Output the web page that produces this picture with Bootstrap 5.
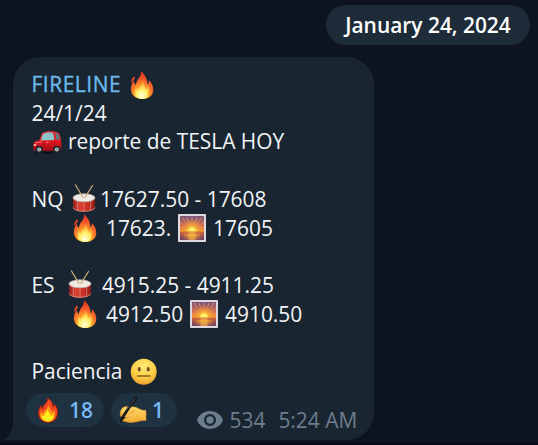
<!DOCTYPE html>
<html lang="es" data-bs-theme="dark">
<head>
<meta charset="utf-8">
<meta name="viewport" content="width=device-width, initial-scale=1">
<title>FIRELINE</title>
<link href="https://cdn.jsdelivr.net/npm/bootstrap@5.3.0/dist/css/bootstrap.min.css" rel="stylesheet">
<style>
body{background:#0d131f;font-family:"Open Sans",sans-serif;font-size:20.92px;line-height:28.7px;color:#f1f4f6;height:445px}
.chat{height:445px;padding:5px 8px 0 13px;border-bottom:2px solid #080916}
.date-pill{width:204px;height:40px;background:#1e2b38;color:#fff;font-weight:600}
.bubble{width:361px;height:383px;margin-top:12px;background:#192530;border-radius:27px 27px 27px 0;padding:13px 17px 0 18.5px}
.tail{left:-9px;bottom:0;width:10px;height:22px}
.message{white-space:pre}
.sender{color:#6cb9ec;letter-spacing:.55px;-webkit-text-stroke:.35px #6cb9ec}
.emo{width:30px;height:30px;vertical-align:.5px;margin:-8px 1px -8px 0;overflow:visible}
.reactions{margin:7.3px 0 0 -5.5px;gap:7px}
.react{height:34px;background:#1e3241;color:#75b8f3;font-weight:600}
.react-fire{width:78px;padding-left:7px}
.react-write{width:66px;padding-left:7px}
.react .emo{margin:0}
.meta{color:#6c7d8e;margin:20.5px 0 0 20px}
.eye{width:26px;height:18px;margin:-2px 6.5px 0 0}
.views{margin-right:13px}
</style>
<script src="https://cdn.jsdelivr.net/npm/bootstrap@5.3.0/dist/js/bootstrap.bundle.min.js"></script>
</head>
<body>
<svg width="0" height="0" class="position-absolute" aria-hidden="true">
<defs>
<radialGradient id="gFire" cx=".48" cy=".88" r=".85"><stop offset="0" stop-color="#fff9a8"/><stop offset=".2" stop-color="#ffe052"/><stop offset=".42" stop-color="#fd9a2b"/><stop offset=".7" stop-color="#f2552a"/><stop offset="1" stop-color="#dc3020"/></radialGradient>
<radialGradient id="gCore" cx=".5" cy=".85" r=".8"><stop offset="0" stop-color="#fffde0"/><stop offset=".45" stop-color="#fff06a"/><stop offset="1" stop-color="#ff9a30" stop-opacity=".75"/></radialGradient>
<linearGradient id="gCar" x2="0" y2="1"><stop offset="0" stop-color="#e8343a"/><stop offset=".55" stop-color="#e01422"/><stop offset="1" stop-color="#9e0c17"/></linearGradient>
<linearGradient id="gDrum"><stop offset="0" stop-color="#8f1f18"/><stop offset=".3" stop-color="#dc4234"/><stop offset=".7" stop-color="#c52e24"/><stop offset="1" stop-color="#84190f"/></linearGradient>
<linearGradient id="gSky" x2="0" y2="1"><stop offset="0" stop-color="#75567e"/><stop offset=".4" stop-color="#d36b55"/><stop offset=".68" stop-color="#ffa62b"/><stop offset=".7" stop-color="#b6583c"/><stop offset="1" stop-color="#714565"/></linearGradient>
<radialGradient id="gSun" cx=".5" cy=".62" r=".5"><stop offset="0" stop-color="#fff36a"/><stop offset=".35" stop-color="#ffbd30" stop-opacity=".9"/><stop offset="1" stop-color="#f0813c" stop-opacity="0"/></radialGradient>
<radialGradient id="gFace" cx=".5" cy=".3" r=".75"><stop offset="0" stop-color="#ffe978"/><stop offset=".55" stop-color="#fdd047"/><stop offset="1" stop-color="#e9992a"/></radialGradient>
<linearGradient id="gHand" x2="0" y2="1"><stop offset="0" stop-color="#ffdb69"/><stop offset="1" stop-color="#f2aa35"/></linearGradient>
</defs>
<symbol id="fire" viewBox="0 0 30 30">
<path fill="url(#gFire)" d="M14.2 1C15.8 3 18.4 5.500 19.600 9C20.300 11 20.300 13 20.700 14.500C22 13.500 22 11.500 21.600 10C24.500 12.500 26.500 16.300 26.300 20.200C26 25.600 21.300 29 15.200 29C8.500 29 4 25 3.900 19.500C3.800 15.500 5.300 12.700 6.900 10.800C7 12.500 7.500 14 8.800 15C9.200 12.300 10 10.300 11.700 8.200C13.500 6 14.500 3.700 14.200 1Z"/>
<path fill="#ee4b2a" d="M7 6.300C8.500 7.600 7.800 9 6.300 10.500C5.500 11.500 4.900 12.500 4.500 13.200C3.800 10.700 5 8.800 7 6.300Z"/>
<path fill="url(#gCore)" d="M15.800 10.500C16.500 14 18.200 16.500 18.700 19C20 18.300 20.600 17 20.500 15.700C22.300 19 22.600 22.400 20.900 25.300C19.300 28 17.300 28.800 14.700 28.800C10.300 28.800 7.400 26.200 7.500 22.800C7.500 20.700 8.300 19 9.300 17.500C9.600 19 10.100 20 11.200 20.500C12 17 15.500 15 15.800 10.500Z"/>
</symbol>
<symbol id="firebold" viewBox="0 0 30 30">
<path fill="#f34922" stroke="#a91b0e" stroke-width="1" d="M14.300 3.300C17.500 4.500 20 7.500 19.800 12C21 11.500 21.500 10 21.300 9C23.800 12 25 15 24.400 19C23.700 24.500 20 27.300 15 27.300C9.200 27.300 5.700 23.700 5.600 18.800C5.500 15.300 6.300 12.300 8.300 10.500C8.200 12 8.700 13.300 9.500 14C9.600 11 11.500 10 13 8C14.300 6.300 14.800 5 14.300 3.300Z"/>
<path fill="#ff9b13" d="M15.300 9.500C16.200 13 18.500 15 19.300 17.500Q20.700 16.500 21 15C24 21 21 26.700 15 26.700C10 26.700 6.900 23.500 7.200 19.500Q7.500 17.500 8.300 16Q9 18 10.500 18.500C11 15.500 15 14 15.300 9.500Z"/>
<path fill="#ffed1e" d="M14.300 14.300C14.800 17.500 17 18.500 18 21Q19.500 20.600 20 19C21.500 23.500 19 26.500 15 26.500C10.500 26.500 8 23.500 8.800 20Q9.600 21.300 11 21.200C11.300 18.500 14 17.500 14.300 14.300Z"/>
</symbol>
<symbol id="car" viewBox="0 0 30 30">
<ellipse cx="15" cy="25.500" rx="13" ry="1.200" fill="#0c1218"/>
<path fill="url(#gCar)" d="M10.200 6C14 3.900 22.500 3.700 26.500 6C28.500 7.500 29 12.500 29.300 16.500V21Q29 23.500 27 24H5C2.500 23.800 1.300 23 1.300 21V18C1.700 14.500 4 13.500 7.200 13.200Z"/>
<path fill="#8dc6c9" d="M11.500 6.800C13.500 5.500 18 5 20.500 5.700C21.700 8 22.200 10.500 22.200 13L9 13.400Q9.500 9.500 11.500 6.800Z"/>
<path fill="#537d88" d="M23.200 6.200Q25.800 6.200 26.600 7.500Q27.500 10 27.500 12.600H24.300Q24.300 9 23.200 6.200Z"/>
<path fill="none" stroke="#a8101b" stroke-width=".8" d="M12 14V22M22.500 14V19"/>
<path stroke="#f5747a" stroke-width=".9" d="M3 15.800L10 15M14 15.500H16.500"/>
<ellipse cx="3" cy="18" rx="1.300" ry="1" fill="#ffc6a0"/>
<g fill="#25282c"><circle cx="7.200" cy="22.500" r="3.700"/><circle cx="24.800" cy="22.500" r="3.700"/></g>
<g fill="#b8bec2"><circle cx="7.200" cy="22.500" r="2"/><circle cx="24.800" cy="22.500" r="2"/></g>
<g fill="#70777c"><circle cx="7.200" cy="22.500" r=".8"/><circle cx="24.800" cy="22.500" r=".8"/></g>
</symbol>
<symbol id="drum" viewBox="0 0 30 30">
<path fill="url(#gDrum)" d="M4 14V24C5.500 29 24.500 29 26 24V14Z"/>
<path fill="none" stroke="#d5a39a" stroke-width=".7" d="M4 23.500C5.500 28.500 24.500 28.500 26 23.500"/>
<path stroke="#e9b7a8" stroke-width=".5" d="M8.300 16V26.500M15 17V27.500M21.700 16V26.500"/>
<ellipse cx="15" cy="13.800" rx="11" ry="4" fill="#f0ebe6" stroke="#b8aaa5" stroke-width=".8"/>
<g stroke="#c8ad78" stroke-width="1.300" stroke-linecap="round"><path d="M6.500 1L14 13.500M23.500 1.500L16 13.500"/></g>
</symbol>
<symbol id="sunrise" viewBox="0 0 30 30">
<rect x="1" y="1" width="28" height="28" rx="1" fill="#ddd9df"/>
<rect x="3" y="3" width="24" height="24" fill="url(#gSky)"/>
<g stroke="#f2a34c" stroke-width=".8" opacity=".8"><path d="M15 18V4M15 18L10 4M15 18L5 4M15 18L3 9M15 18L3 14M15 18L20 4M15 18L25 4M15 18L27 9M15 18L27 14"/></g>
<rect x="3" y="3" width="24" height="24" fill="url(#gSun)"/>
<path fill="#fff16b" d="M11.300 18.300A3.700 3.700 0 0 1 18.700 18.300Z"/>
<path fill="#b9573f" d="M3 18.500H27V21H3Z" opacity=".65"/>
<path fill="#efaa48" d="M11.500 18.500H18.500V27H11.500Z" opacity=".65"/>
</symbol>
<symbol id="neutral" viewBox="0 0 30 30">
<circle cx="15.700" cy="14.800" r="13" fill="url(#gFace)"/>
<g fill="#73501b"><ellipse cx="11.200" cy="12.200" rx="1.500" ry="2.200"/><ellipse cx="20.200" cy="12.200" rx="1.500" ry="2.200"/></g>
<path stroke="#85601f" stroke-width="1.500" stroke-linecap="round" d="M9.600 18.900H22"/>
</symbol>
<symbol id="writing" viewBox="0 0 30 30">
<path fill="url(#gHand)" stroke="#d98d2b" stroke-width=".6" d="M2.300 21V17Q3.500 12 8 11.600L12 12.200Q16 11.200 20 13.200Q24 15.800 28 15.300V25.500Q23 25.300 20 26.500Q12 28.300 8 26.800L4 25.500Q3.500 23.500 6 23Z"/>
<path fill="none" stroke="#dc962f" stroke-width=".9" d="M3 19L9 18.500M6 23L11 22.500M12 18Q15 17.500 17 15"/>
<path stroke="#17191c" stroke-width="3.600" stroke-linecap="round" d="M18 3L13 9.500"/>
<path stroke="#17191c" stroke-width="2.800" d="M14 8L5.500 21"/>
<path fill="#111315" d="M4.200 20L7.500 22.500L1.800 28Z"/>
<path stroke="#575a5f" stroke-width=".8" d="M17 3.500L9 14.500"/>
</symbol>
</svg>
<main class="chat d-flex flex-column">
  <div class="date-pill rounded-pill align-self-end d-flex align-items-center justify-content-center flex-shrink-0">January 24, 2024</div>
  <article class="bubble position-relative flex-shrink-0">
    <svg class="tail position-absolute" viewBox="0 0 10 22" aria-hidden="true"><path fill="#192530" d="M10 0H9V4C9 12 6 18 0 21.500V22H10Z"/></svg>
    <div class="message"><div><span class="sender">FIRELINE</span> <svg class="emo"><use href="#fire"/></svg></div><div>24/1/24</div><div><svg class="emo"><use href="#car"/></svg> reporte de TESLA HOY</div><br><div>NQ <svg class="emo"><use href="#drum"/></svg>17627.50 - 17608</div><div>       <svg class="emo"><use href="#fire"/></svg> 17623. <svg class="emo"><use href="#sunrise"/></svg> 17605</div><br><div>ES  <svg class="emo"><use href="#drum"/></svg> 4915.25 - 4911.25</div><div>       <svg class="emo"><use href="#fire"/></svg> 4912.50 <svg class="emo"><use href="#sunrise"/></svg> 4910.50</div><br><div>Paciencia <svg class="emo"><use href="#neutral"/></svg></div></div>
    <footer class="d-flex align-items-start">
      <div class="reactions d-flex flex-shrink-0">
        <div class="react react-fire rounded-pill d-flex align-items-center"><svg class="emo me-1"><use href="#firebold"/></svg>&#8202;18</div>
        <div class="react react-write rounded-pill d-flex align-items-center"><svg class="emo me-1"><use href="#writing"/></svg>1</div>
      </div>
      <div class="meta d-flex align-items-center text-nowrap">
        <svg class="eye" viewBox="0 0 26 18" aria-label="Vistas"><path fill="#6c7d8e" fill-rule="evenodd" d="M13 0C7 0 2 3.700 0 9C2 14.300 7 18 13 18S24 14.300 26 9C24 3.700 19 0 13 0ZM13 15A6 6 0 1 1 13 3A6 6 0 0 1 13 15Z"/><circle cx="13" cy="9" r="3.700" fill="#6c7d8e"/></svg>
        <span class="views">534</span><span>5:24 AM</span>
      </div>
    </footer>
  </article>
</main>
</body>
</html>
